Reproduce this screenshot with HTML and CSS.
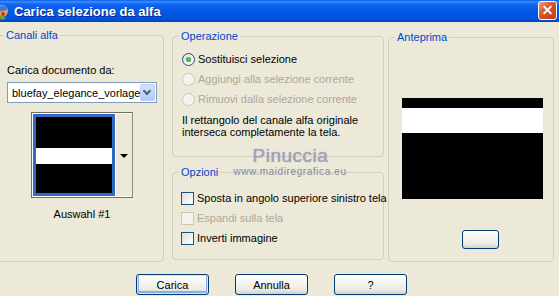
FILE: index.html
```html
<!DOCTYPE html>
<html lang="it">
  <head>
    <meta charset="UTF-8" />
    <meta name="viewport" content="width=device-width, initial-scale=1.0" />
    <title>Carica selezione da alfa</title>
    <link rel="stylesheet" href="styles.css">
  </head>
  <body>
    <div class="window">
      <div class="titlebar">
        <svg class="app-icon" width="10" height="18" viewBox="0 0 10 18">
          <circle cx="2" cy="9" r="6" fill="#e8a050" />
          <path d="M-3 5 L6 3 L7 8 L-2 10 Z" fill="#3a7ad8" />
          <circle cx="3" cy="12" r="2" fill="#c83818" />
          <path d="M0 14 L6 15 L4 18 L-2 17 Z" fill="#6a9a30" />
        </svg>
        <span class="title">Carica selezione da alfa</span>
        <button class="close-btn" aria-label="Chiudi"></button>
      </div>

      <div class="content">
        <div class="columns">
          <div class="group group-channels">
            <span class="group-title">Canali alfa</span>
            <div class="field-label">Carica documento da:</div>
            <div class="select">
              <span class="select-text">bluefay_elegance_vorlage</span>
              <span class="select-btn"></span>
            </div>
            <div class="thumb">
              <div class="thumb-image"><div class="thumb-band"></div></div>
              <div class="thumb-arrow"><span class="arrow-down"></span></div>
            </div>
            <div class="thumb-caption">Auswahl #1</div>
          </div>

          <div class="middle">
            <div class="group group-operation">
              <span class="group-title">Operazione</span>
              <label class="option"><span class="radio checked"></span>Sostituisci selezione</label>
              <label class="option disabled"><span class="radio"></span>Aggiungi alla selezione corrente</label>
              <label class="option disabled"><span class="radio"></span>Rimuovi dalla selezione corrente</label>
              <p class="note">Il rettangolo del canale alfa originale<br />interseca completamente la tela.</p>
            </div>

            <div class="group group-options">
              <span class="group-title">Opzioni</span>
              <label class="option"><span class="checkbox"></span>Sposta in angolo superiore sinistro tela</label>
              <label class="option disabled"><span class="checkbox"></span>Espandi sulla tela</label>
              <label class="option"><span class="checkbox"></span>Inverti immagine</label>
            </div>
          </div>

          <div class="group group-preview">
            <span class="group-title">Anteprima</span>
            <div class="preview"><div class="preview-band"></div></div>
            <button class="btn btn-small"></button>
          </div>
        </div>

        <div class="buttons">
          <button class="btn btn-default">Carica</button>
          <button class="btn">Annulla</button>
          <button class="btn">?</button>
        </div>
      </div>

      <div class="watermark">
        <div class="wm-name">Pinuccia</div>
        <div class="wm-site">www.maidiregrafica.eu</div>
      </div>
    </div>
  </body>
</html>
```

FILE: styles.css
```css
body {
  margin: 0;
  font-family: "Liberation Sans", Arial, sans-serif;
  font-size: 11px;
  color: #000;
}

.window {
  position: relative;
  width: 559px;
  height: 296px;
  background: #ece9d8;
  overflow: hidden;
}

/* title bar */

.titlebar {
  position: relative;
  height: 22px;
  display: flex;
  align-items: center;
  background: linear-gradient(
    #0a5fe8 0%,
    #3b8dff 8%,
    #1566f0 18%,
    #0058e6 50%,
    #0052dc 85%,
    #0044c4 100%
  );
}

.app-icon {
  position: absolute;
  left: 0;
  top: 2px;
}

.title {
  margin-left: 14px;
  color: #fff;
  font-weight: bold;
  font-size: 13px;
  text-shadow: 1px 1px 0 #0a2a8a;
}

.close-btn {
  position: absolute;
  left: 538px;
  top: 1px;
  width: 19px;
  height: 19px;
  padding: 0;
  border: 1px solid #fff;
  border-radius: 3px;
  background: linear-gradient(135deg, #ec9a7c 0%, #d8572f 45%, #c03c14 100%);
}

.close-btn::before,
.close-btn::after {
  content: "";
  position: absolute;
  left: 3px;
  top: 7px;
  width: 11px;
  height: 2px;
  background: #fff;
  transform: rotate(45deg);
}

.close-btn::after {
  transform: rotate(-45deg);
}

/* layout */

.columns {
  display: flex;
  align-items: flex-start;
  padding-top: 13px;
}

.group {
  position: relative;
  box-sizing: border-box;
  border: 1px solid #d0d0bf;
  border-radius: 4px;
}

.group-title {
  position: absolute;
  top: -7px;
  left: 6px;
  padding: 0 2px;
  line-height: 13px;
  background: #ece9d8;
  color: #0046d5;
}

.group-channels {
  margin-left: -3px;
  width: 167px;
  height: 227px;
  padding: 28px 8px 0 9px;
}

.middle {
  display: flex;
  flex-direction: column;
  gap: 15px;
  margin-left: 8px;
  margin-top: 1px;
  width: 212px;
}

.group-operation {
  height: 121px;
  padding: 12px 0 0 9px;
}

.group-options {
  height: 88px;
  padding: 15px 0 0 8px;
}

.group-preview {
  margin-left: 4px;
  margin-top: 2px;
  width: 166px;
  height: 225px;
  padding: 60px 0 0 13px;
}

/* left group */

.field-label {
  line-height: 13px;
}

.select {
  display: flex;
  align-items: center;
  box-sizing: border-box;
  margin-top: 5px;
  width: 150px;
  height: 21px;
  border: 1px solid #7f9db9;
  background: #fff;
  padding: 1px;
}

.select-text {
  flex: 1;
  padding-left: 3px;
  white-space: nowrap;
  overflow: hidden;
}

.select-btn {
  position: relative;
  width: 15px;
  height: 17px;
  border-radius: 2px;
  background: linear-gradient(#d6e2fb, #b4c9f6);
  border: 1px solid #b9cdf6;
  box-sizing: border-box;
}

.select-btn::after {
  content: "";
  position: absolute;
  left: 3px;
  top: 3px;
  width: 4px;
  height: 4px;
  border-right: 2px solid #4d6185;
  border-bottom: 2px solid #4d6185;
  transform: rotate(45deg);
}

.thumb {
  display: flex;
  margin: 9px 0 0 24px;
  width: 102px;
  height: 86px;
  box-sizing: border-box;
  border: 1px solid #716f64;
  border-right-color: #8e8c80;
  background: #fff;
  padding: 1px 0 1px 1px;
}

.thumb-image {
  box-sizing: border-box;
  width: 82px;
  border: 3px solid #316ac5;
  background: #000;
}

.thumb-band {
  margin-top: 31px;
  height: 16px;
  background: #fff;
}

.thumb-arrow {
  flex: 1;
  display: flex;
  align-items: center;
  justify-content: center;
  background: #ece9d8;
  border-left: 1px solid #fff;
}

.arrow-down {
  width: 0;
  height: 0;
  border-left: 4px solid transparent;
  border-right: 4px solid transparent;
  border-top: 4px solid #000;
  margin-top: 2px;
}

.thumb-caption {
  margin-top: 9px;
  margin-left: 24px;
  width: 102px;
  text-align: center;
  line-height: 14px;
}

/* radios and checkboxes */

.option {
  display: flex;
  align-items: center;
  height: 20px;
  white-space: nowrap;
}

.option.disabled {
  color: #aca899;
}

.radio,
.checkbox {
  box-sizing: border-box;
  width: 13px;
  height: 13px;
  margin-right: 3px;
  border: 1px solid #1c5180;
  background: linear-gradient(135deg, #dcdcd7, #fff);
  flex-shrink: 0;
}

.radio {
  position: relative;
  border-radius: 50%;
}

.radio.checked::after {
  content: "";
  position: absolute;
  left: 3px;
  top: 3px;
  width: 5px;
  height: 5px;
  border-radius: 50%;
  background: radial-gradient(#5fd35f, #219521);
}

.disabled .radio,
.disabled .checkbox {
  border-color: #cac8bb;
  background: #f4f3ee;
}

.note {
  margin: 5px 0 0;
  line-height: 12px;
}

/* preview */

.preview {
  width: 141px;
  height: 101px;
  background: #000;
  overflow: hidden;
}

.preview-band {
  margin-top: 10px;
  height: 25px;
  background: #fff;
}

/* buttons */

.buttons {
  display: flex;
  gap: 26px;
  margin-top: 12px;
  padding-left: 136px;
}

.btn {
  box-sizing: border-box;
  width: 73px;
  height: 21px;
  padding: 0;
  border: 1px solid #003c74;
  border-radius: 3px;
  background: linear-gradient(#fff 0%, #f4f4f0 40%, #ecebe6 75%, #d6d0c5 100%);
  font-family: "Liberation Sans", Arial, sans-serif;
  font-size: 11px;
  color: #000;
}

.btn-default {
  box-shadow: inset 0 0 0 1px #cee7ff, inset 0 -1px 0 2px #89adeb;
}

.btn-small {
  display: block;
  margin: 31px 0 0 60px;
  width: 37px;
  height: 19px;
}

/* watermark over the dialog */

.watermark {
  position: absolute;
  left: 229px;
  top: 145px;
  width: 122px;
  text-align: center;
  pointer-events: none;
}

.wm-name {
  font-size: 19px;
  line-height: 22px;
  letter-spacing: 0.5px;
  color: #a3a3bd;
  margin-left: 1px;
  text-shadow: 0 0 1px #8c8ca8;
}

.wm-site {
  font-size: 10px;
  line-height: 10px;
  letter-spacing: 0.6px;
  color: #8a8aa2;
}
```
